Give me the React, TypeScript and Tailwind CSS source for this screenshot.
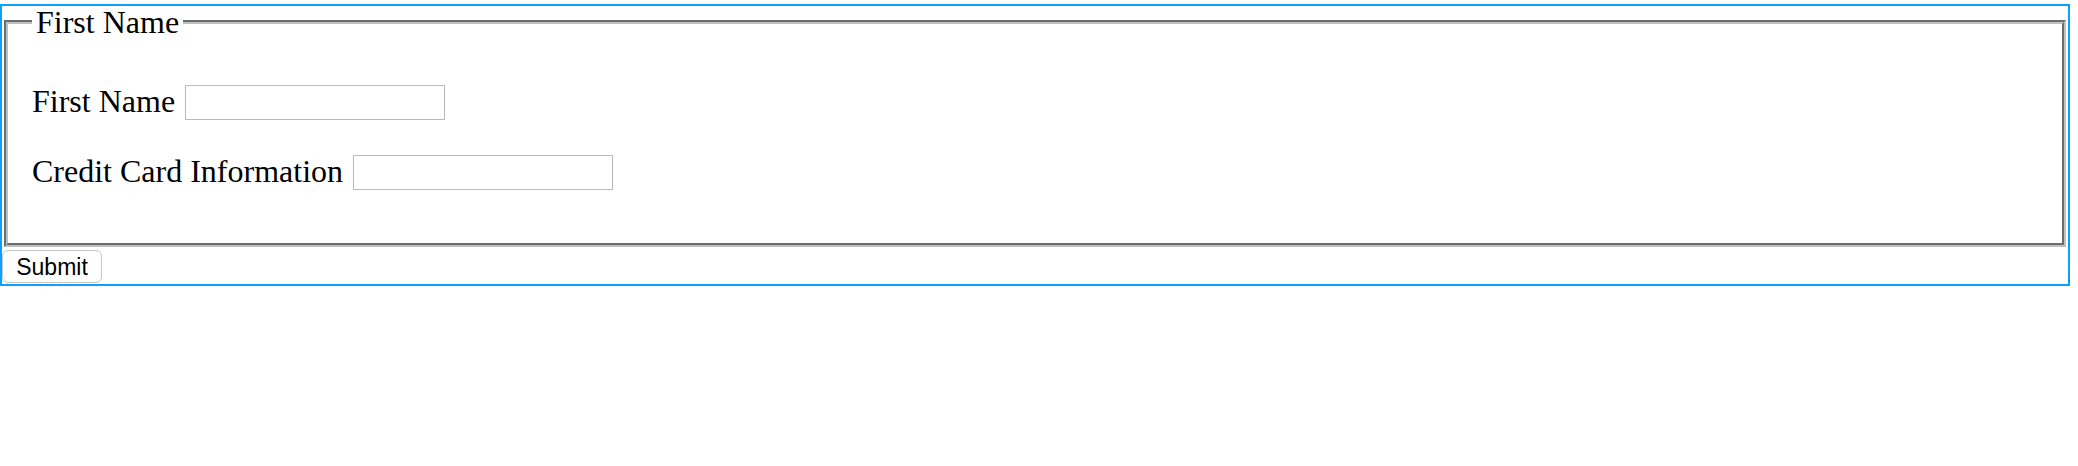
export default function App() {
  return (
    <div className="min-h-screen bg-white">
      <form
        className="mt-[4px] w-[2070px] border-2 border-[#0aa0fb] text-black"
        onSubmit={(e) => e.preventDefault()}
      >
        <fieldset className="mx-[2px] border-[4px] border-[#c0c0c0] [border-style:groove] pl-[24px] pr-[24px] pt-[47px] pb-[53px] font-['Liberation_Serif',serif] text-[32px]">
          <legend className="px-[4px] leading-[32px]">First Name</legend>

          <div className="flex items-start gap-[10px]">
            <label htmlFor="first-name" className="leading-[32px]">
              First Name
            </label>
            <input
              id="first-name"
              type="text"
              className="h-[35px] w-[260px] border border-[#bababa] bg-white outline-none"
            />
          </div>

          <div className="mt-[35px] flex items-start gap-[10px]">
            <label htmlFor="cc-info" className="leading-[32px]">
              Credit Card Information
            </label>
            <input
              id="cc-info"
              type="text"
              className="h-[35px] w-[260px] border border-[#bababa] bg-white outline-none"
            />
          </div>
        </fieldset>

        <button
          type="submit"
          className="mt-[3px] mb-[1px] flex h-[33px] w-[100px] items-center justify-center rounded-[6px] border border-[#c6c6c6] bg-white pt-[2px] font-['Liberation_Sans',Arial,sans-serif] text-[23px] leading-none text-black"
        >
          Submit
        </button>
      </form>
    </div>
  );
}
